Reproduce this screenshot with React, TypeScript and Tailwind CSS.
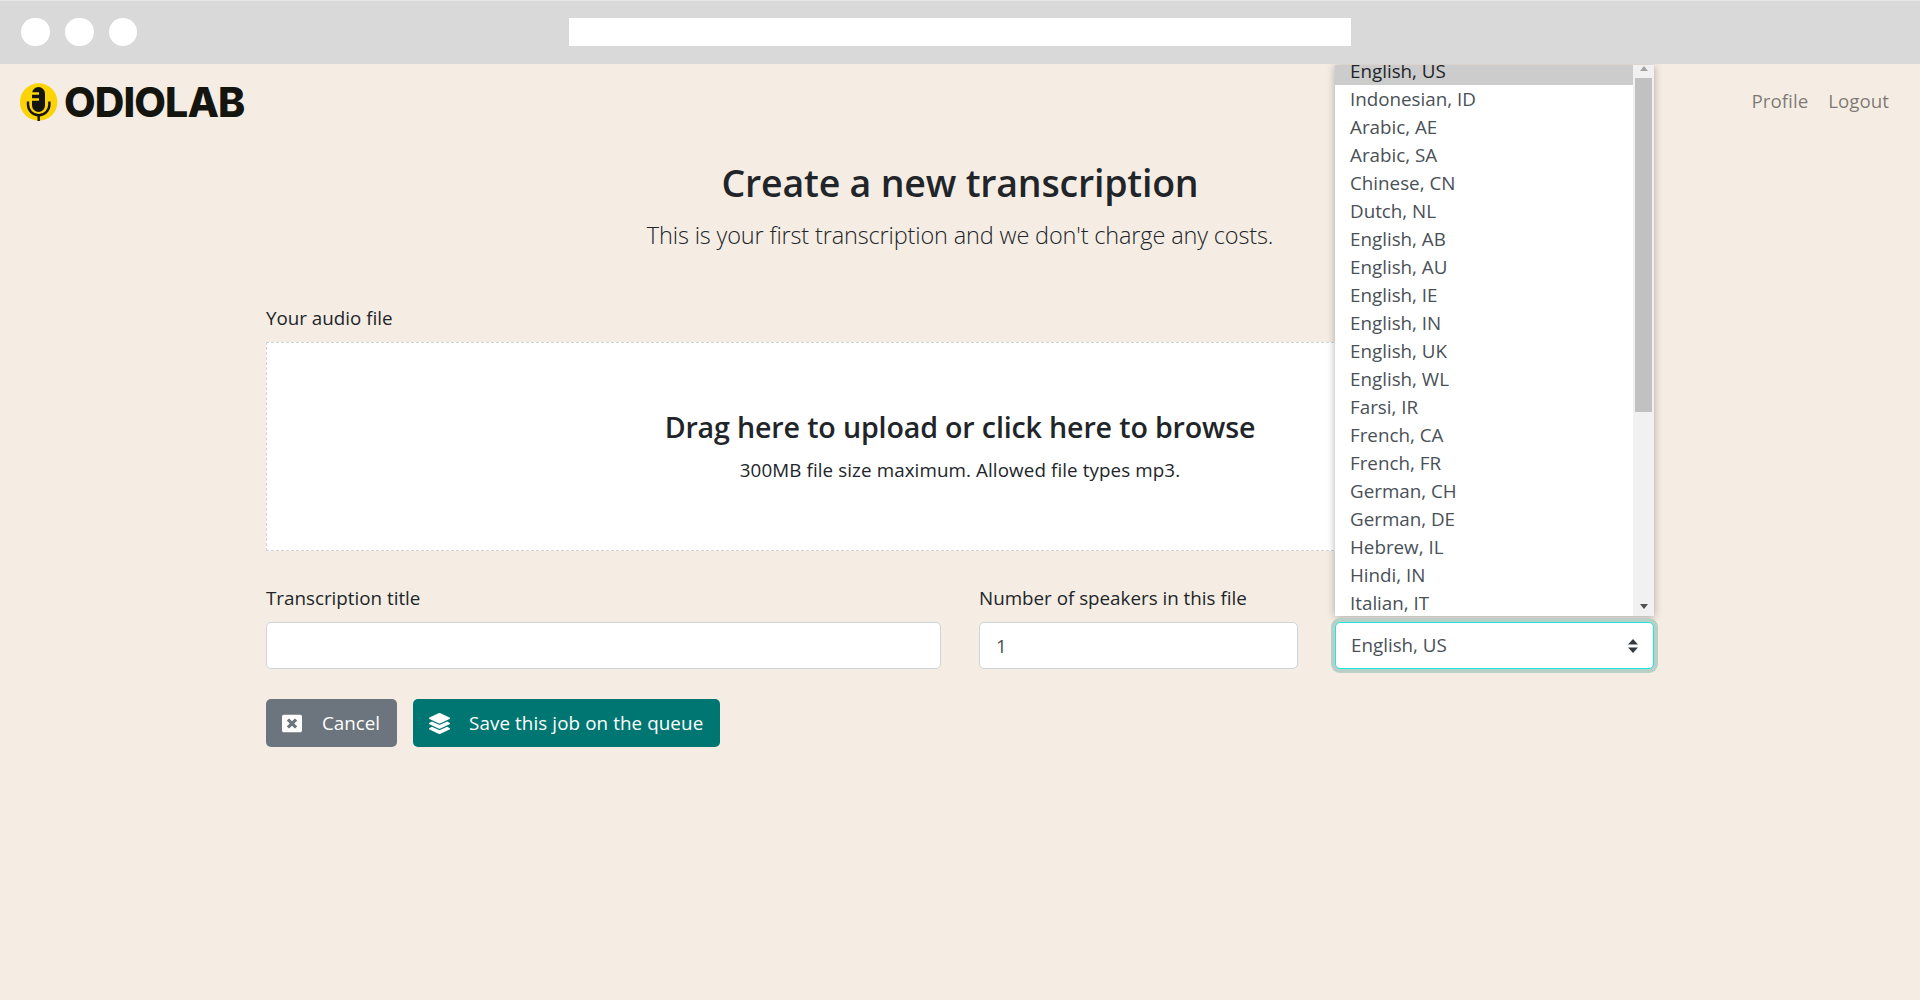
import { FaWindowClose, FaLayerGroup } from "react-icons/fa";

const options = [
  "English, US", "Indonesian, ID", "Arabic, AE", "Arabic, SA", "Chinese, CN", "Dutch, NL",
  "English, AB", "English, AU", "English, IE", "English, IN", "English, UK", "English, WL",
  "Farsi, IR", "French, CA", "French, FR", "German, CH", "German, DE", "Hebrew, IL", "Hindi, IN", "Italian, IT",
];

function Logo() {
  return (
    <svg width="38" height="38" viewBox="0 0 38 38" className="shrink-0">
      <circle cx="18.7" cy="19" r="18.7" fill="#fbd307" />
      <rect x="12" y="4" width="13" height="25" rx="6.5" fill="#15150f" />
      <path d="M11 10.5h8M11 16.5h8" stroke="#fbd307" strokeWidth="2.6" />
      <path d="M8 18.5v3a10.7 10.7 0 0 0 21.4 0v-3" fill="none" stroke="#15150f" strokeWidth="2.4" />
      <path d="M18.7 32v6" stroke="#15150f" strokeWidth="2.4" />
    </svg>
  );
}

export default function App() {
  return (
    <div className="h-[1000px] overflow-hidden bg-[#f5ede4] font-['Open_Sans',sans-serif] text-[18.8px] text-[#212529]">
      <div className="relative z-10 flex h-16 items-center border-t border-[#e6e6e6] bg-[#d9d9d9] pb-[1px] pl-[21px]">
        <div className="flex gap-[15px]">
          <span className="h-7 w-[29px] rounded-full bg-white" />
          <span className="h-7 w-[29px] rounded-full bg-white" />
          <span className="h-7 w-[28px] rounded-full bg-white" />
        </div>
        <div className="ml-[432px] h-7 w-[782px] bg-white" />
      </div>

      <nav className="flex h-[76px] items-center justify-between pl-5 pr-[31px]">
        <div className="flex items-center gap-[6px]">
          <Logo />
          <span className="font-['Inter',sans-serif] text-[41px] leading-none font-extrabold tracking-[-0.9px] text-[#15150f]">ODIOLAB</span>
        </div>
        <div className="mb-[2px] flex gap-[20px] text-[rgba(0,0,0,0.5)]">
          <a>Profile</a>
          <a>Logout</a>
        </div>
      </nav>

      <main className="mx-[266px] mt-[-2px]">
        <h1 className="mt-[21px] text-center text-[37.5px] leading-[48px] font-semibold tracking-[-0.2px]">Create a new transcription</h1>
        <p className="mt-[12px] text-center text-[23.5px] leading-[32px] font-light tracking-[-0.15px]">This is your first transcription and we don't charge any costs.</p>

        <label className="mt-[53px] block leading-[28px]">Your audio file</label>
        <div className="mt-[10px] flex h-[209px] flex-col items-center justify-center border border-dashed border-[#ced4da] bg-white">
          <h3 className="text-[28.6px] leading-[36px] font-semibold tracking-[-0.15px]">Drag here to upload or click here to browse</h3>
          <p className="mt-[11px] leading-[28px] tracking-[0.1px]">300MB file size maximum. Allowed file types mp3.</p>
        </div>

        <div className="mt-[33px] flex">
          <div className="w-[675px]">
            <label className="block leading-[28px]">Transcription title</label>
            <input className="mt-[10px] h-[47px] w-full rounded-[5px] border border-[#ced4da] bg-white px-4 outline-none" />
          </div>
          <div className="ml-[38px] w-[319px]">
            <label className="block leading-[28px]">Number of speakers in this file</label>
            <input defaultValue="1" className="mt-[10px] h-[47px] w-full rounded-[5px] border border-[#ced4da] bg-white px-4 text-[#495057] outline-none" />
          </div>
          <div className="relative ml-[37px] w-[319px] self-end">
            <div className="absolute right-0 bottom-[calc(100%+6px)] left-0 h-[551px] overflow-hidden bg-white text-[#495057] shadow-[0_1px_8px_rgba(0,0,0,0.3)]">
              <div className="flex h-full">
                <ul className="-mt-2 flex-1">
                  {options.map((o, i) => (
                    <li key={o} className={`h-7 pl-[15px] leading-[28px] ${i === 0 ? "bg-[#cccccc] text-[#212529]" : ""}`}>{o}</li>
                  ))}
                </ul>
                <div className="relative flex w-[21px] justify-center bg-[#f1f1f1]">
                  <span className="absolute top-[1px] h-0 w-0 border-x-[4px] border-b-[5px] border-x-transparent border-b-[#a3a3a3]" />
                  <span className="mt-[13px] h-[334px] w-[17px] bg-[#c1c1c1]" />
                  <span className="absolute bottom-[7px] h-0 w-0 border-x-[4px] border-t-[5px] border-x-transparent border-t-[#505050]" />
                </div>
              </div>
            </div>
            <div className="relative">
              <select className="h-[47px] w-full appearance-none rounded-[5px] border border-[#1ee6e0] bg-white px-[15px] text-[#495057] shadow-[0_0_0_4px_#b8d0c8] outline-none">
                {options.map((o) => (
                  <option key={o}>{o}</option>
                ))}
              </select>
              <svg width="10" height="14" viewBox="0 0 10 14" className="pointer-events-none absolute top-[17px] right-[16px]">
                <path d="M5 0 10 5.5H0ZM5 14 0 8.5h10Z" fill="#343a40" />
              </svg>
            </div>
          </div>
        </div>

        <div className="mt-[30px] flex gap-4">
          <button className="flex h-12 w-[131px] items-center gap-[20px] rounded-[5px] bg-[#6c757d] pl-4 text-white">
            <FaWindowClose className="h-[23px] w-5" />
            <span>Cancel</span>
          </button>
          <button className="flex h-12 w-[307px] items-center gap-[19px] rounded-[5px] bg-[#007672] pl-4 text-white">
            <FaLayerGroup className="h-[23px] w-[21px]" />
            <span className="tracking-[0.1px]">Save this job on the queue</span>
          </button>
        </div>
      </main>
    </div>
  );
}
